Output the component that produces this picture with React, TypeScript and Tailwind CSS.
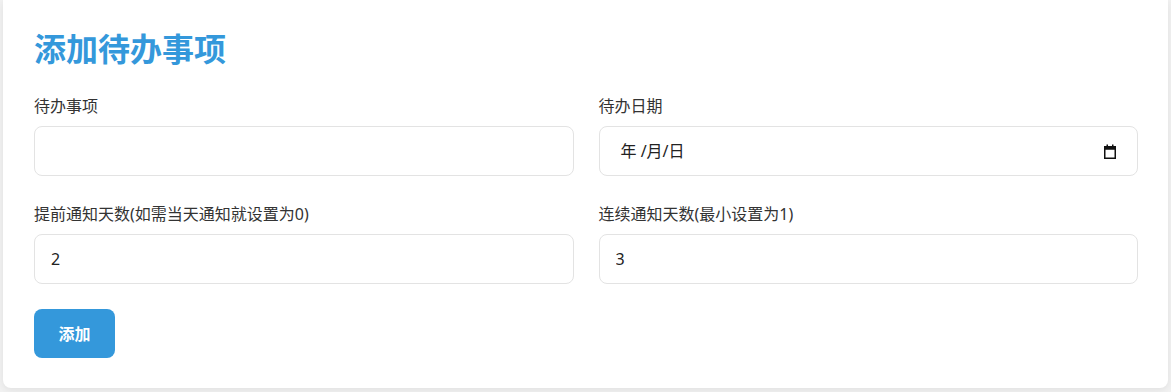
import { useState } from 'react';

const font = { fontFamily: '"Noto Sans", "Noto Sans CJK SC", sans-serif' };

const Field = ({ label, children }: { label: string; children: React.ReactNode }) => (
  <div className="mb-[26px]">
    <label className="block text-[16px] leading-[24px] font-normal text-[#333] mb-[8px]">{label}</label>
    {children}
  </div>
);

const inputCls =
  'w-full h-[50px] px-[16px] border border-[#e3e3e3] rounded-[8px] text-[16px] text-[#222] bg-white outline-none focus:border-[#3498db]';

const CalendarIcon = () => (
  <svg width="12" height="15" viewBox="0 0 12 15" className="text-[#111]">
    <rect x="2.5" y="0.5" width="1.5" height="2.5" fill="currentColor" />
    <rect x="8" y="0.5" width="1.5" height="2.5" fill="currentColor" />
    <rect x="0.75" y="2.75" width="10.5" height="11.5" fill="none" stroke="currentColor" strokeWidth="1.5" />
    <rect x="0.75" y="2.75" width="10.5" height="3" fill="currentColor" />
  </svg>
);

const App = () => {
  const [title, setTitle] = useState('');
  const [advance, setAdvance] = useState('2');
  const [repeat, setRepeat] = useState('3');

  return (
    <div className="min-h-[392px] bg-[#f2f2f2] px-[3px] pb-[4px]" style={font}>
      <div className="bg-white rounded-b-[8px] shadow-[0_2px_8px_rgba(0,0,0,0.08)] pt-[30px] pb-[30px] pl-[31px] pr-[30px]">
        <h2 className="text-[32px] leading-[38px] font-bold text-[#3498db] mb-[26px]">添加待办事项</h2>

        <div className="grid grid-cols-2 gap-x-[25px]">
          <Field label="待办事项">
            <input className={inputCls} value={title} onChange={(e) => setTitle(e.target.value)} />
          </Field>
          <Field label="待办日期">
            <div className="w-full h-[50px] pl-[21px] pr-[21px] border border-[#e3e3e3] rounded-[8px] bg-white flex items-center justify-between">
              <span className="text-[16px] text-[#222]">年 /月/日</span>
              <CalendarIcon />
            </div>
          </Field>
          <Field label="提前通知天数(如需当天通知就设置为0)">
            <input className={inputCls} value={advance} onChange={(e) => setAdvance(e.target.value)} />
          </Field>
          <Field label="连续通知天数(最小设置为1)">
            <input className={inputCls} value={repeat} onChange={(e) => setRepeat(e.target.value)} />
          </Field>
        </div>

        <button className="-mt-[1px] w-[81px] h-[49px] rounded-[8px] bg-[#3498db] text-white text-[16px] font-bold">添加</button>
      </div>
    </div>
  );
};

export default App;
